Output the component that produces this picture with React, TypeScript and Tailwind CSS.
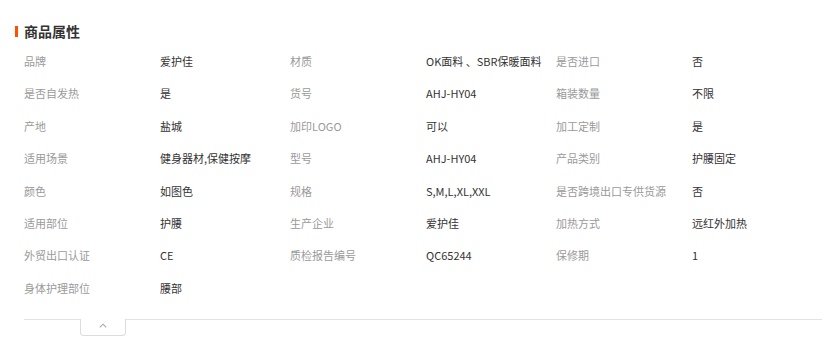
import React from "react";

const rows: [string, string, string, string, string, string][] = [
  ["品牌", "爱护佳", "材质", "OK面料 、SBR保暖面料", "是否进口", "否"],
  ["是否自发热", "是", "货号", "AHJ-HY04", "箱装数量", "不限"],
  ["产地", "盐城", "加印LOGO", "可以", "加工定制", "是"],
  ["适用场景", "健身器材,保健按摩", "型号", "AHJ-HY04", "产品类别", "护腰固定"],
  ["颜色", "如图色", "规格", "S,M,L,XL,XXL", "是否跨境出口专供货源", "否"],
  ["适用部位", "护腰", "生产企业", "爱护佳", "加热方式", "远红外加热"],
  ["外贸出口认证", "CE", "质检报告编号", "QC65244", "保修期", "1"],
];

const font = {
  fontFamily: '"Noto Sans CJK SC", "Liberation Sans", sans-serif',
};

function Label({ t }: { t: string }) {
  return <div className="text-[11px] text-[#9a9a9a] whitespace-nowrap">{t}</div>;
}
function Value({ t }: { t: string }) {
  return <div className="text-[11px] text-[#333] pl-[3px] whitespace-nowrap">{t}</div>;
}

export default function App() {
  return (
    <div className="w-[840px] h-[338px] bg-white" style={font}>
      <div className="pt-[22px] pl-[15px]">
        <div className="flex items-center h-[18px]">
          <div className="w-[3px] h-[11px] bg-[#ff4f00]" />
          <div className="ml-[6px] text-[14px] font-bold text-[#333] leading-[18px]">商品属性</div>
        </div>
      </div>
      <div className="ml-[24px] mr-[18px] mt-[5px]">
        <div className="grid grid-cols-[133px_133px_133px_133px_133px_1fr]">
          {rows.map((r, i) => (
            <React.Fragment key={i}>
              {r.map((c, j) => (
                <div key={j} className="h-[32.4px] flex items-center">
                  {j % 2 === 0 ? <Label t={c} /> : <Value t={c} />}
                </div>
              ))}
            </React.Fragment>
          ))}
          <div className="h-[32.4px] flex items-center">
            <Label t="身体护理部位" />
          </div>
          <div className="h-[32.4px] flex items-center">
            <Value t="腰部" />
          </div>
        </div>
        <div className="mt-[15px] border-t border-[#e3e3e3] h-[16px]">
          <div className="-mt-px ml-[56px] w-[46px] h-[17px] bg-white border-x border-b border-[#dcdcdc] rounded-b-[4px] flex items-center justify-center">
            <svg width="8" height="5" viewBox="0 0 8 5" className="mb-[3px]">
              <path d="M0.8 4.3 L4 1.2 L7.2 4.3" fill="none" stroke="#a8a8a8" strokeWidth="1.1" />
            </svg>
          </div>
        </div>
      </div>
    </div>
  );
}
